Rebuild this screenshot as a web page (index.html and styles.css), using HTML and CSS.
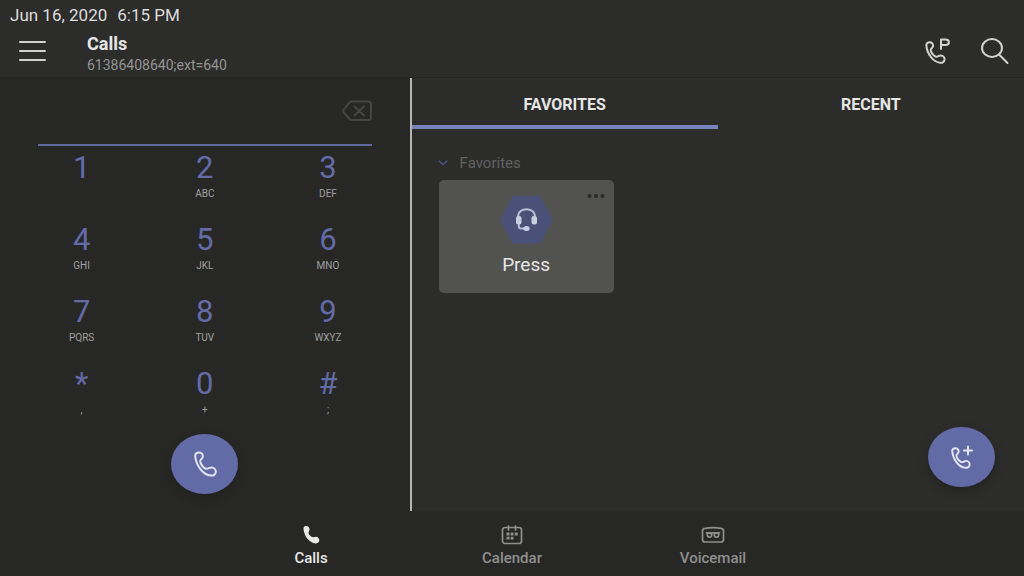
FILE: index.html
```
<!DOCTYPE html>
<html lang="en">
<head>
<meta charset="utf-8">
<title>Calls</title>
<meta name="viewport" content="width=device-width, initial-scale=1">
<link rel="stylesheet" href="styles.css">
</head>
<body>
<svg class="defs" aria-hidden="true">
  <symbol id="handset" viewBox="0 0 24 26">
    <path d="M2.2 5C2 2.8 4 1.4 6 1.4C8.4 1.4 10.2 3.4 9.800 5.800C9.500 7.600 7 8.400 7.200 10.400C7.600 13.400 10.400 17 13 17.800C15 18.300 16.400 16.300 18.600 16.400C21 16.600 23 18.600 22.800 21C22.600 23.500 20.400 24.800 18 24.600C9.600 24 2.800 13.600 2.200 5Z"/>
  </symbol>
</svg>
<header class="header">
  <div class="clock"><span>Jun 16, 2020</span><span>6:15 PM</span></div>
  <div class="bar">
    <button class="icon-btn" aria-label="Menu">
      <svg width="28" height="22" viewBox="0 0 28 22" stroke-width="2"><path d="M2 2H27M2 11H27M2 20H27"/></svg>
    </button>
    <div class="title">
      <h1>Calls</h1>
      <p>61386408640;ext=640</p>
    </div>
    <div class="actions">
      <button class="icon-btn" aria-label="Parked calls">
        <svg width="28" height="28" viewBox="0 0 28 28" stroke-width="2"><use href="#handset" x="0" y="4" width="22" height="23" stroke-width="2.300"/><path d="M17 12V2.500H21.500C26 2.500 26 8 21.500 8H17"/></svg>
      </button>
      <button class="icon-btn" aria-label="Search">
        <svg width="30" height="28" viewBox="0 0 30 28" stroke-width="2"><ellipse cx="12" cy="11" rx="10" ry="9"/><path d="M19 17.500L27.500 26"/></svg>
      </button>
    </div>
  </div>
</header>
<main class="main">
  <section class="dialer" aria-label="Dial pad">
    <div class="entry">
      <input type="tel" aria-label="Phone number">
      <button class="icon-btn erase" aria-label="Delete digit">
        <svg width="30" height="22" viewBox="0 0 30 22" stroke-width="2"><path d="M10 1.500H26Q29 1.500 29 4V17.500Q29 20 26 20H10Q8.500 20 7.500 19L1.800 12.500Q.500 11 1.800 9.500L7.500 2.500Q8.500 1.500 10 1.500ZM12.500 6.500L22 15.500M22 6.500L12.500 15.500"/></svg>
      </button>
    </div>
    <div class="keys">
      <button class="key"><b>1</b><small></small></button>
      <button class="key"><b>2</b><small>ABC</small></button>
      <button class="key"><b>3</b><small>DEF</small></button>
      <button class="key"><b>4</b><small>GHI</small></button>
      <button class="key"><b>5</b><small>JKL</small></button>
      <button class="key"><b>6</b><small>MNO</small></button>
      <button class="key"><b>7</b><small>PQRS</small></button>
      <button class="key"><b>8</b><small>TUV</small></button>
      <button class="key"><b>9</b><small>WXYZ</small></button>
      <button class="key"><b>*</b><small>,</small></button>
      <button class="key"><b>0</b><small>+</small></button>
      <button class="key"><b>#</b><small>;</small></button>
    </div>
    <button class="fab" aria-label="Call">
      <svg width="26" height="28" viewBox="0 0 26 28" stroke-width="2"><use href="#handset" x="1" y="1" width="24" height="26"/></svg>
    </button>
  </section>
  <section class="lists">
    <div class="tabs" role="tablist">
      <button class="tab active" role="tab" aria-selected="true">FAVORITES</button>
      <button class="tab" role="tab" aria-selected="false">RECENT</button>
    </div>
    <div class="group">
      <button class="group-head">
        <svg width="12" height="8" viewBox="0 0 12 8" stroke-width="1.500"><path d="M2 2L6 5.500L10 2"/></svg>
        Favorites
      </button>
      <article class="card">
        <button class="more" aria-label="More options">
          <svg width="18" height="6" viewBox="0 0 18 6"><circle cx="2.500" cy="3" r="2.100"/><circle cx="9" cy="3" r="2.100"/><circle cx="15.500" cy="3" r="2.100"/></svg>
        </button>
        <svg class="avatar" width="54" height="50" viewBox="0 0 54 50">
          <path class="hex" d="M15.500 1H39.500Q41 1 42 2.500L53 23.500Q53.800 25 53 26.500L42 47Q41 48.500 39.500 48.500H15.500Q14 48.500 13 47L2 26.500Q1 25 2 23.500L13 2.500Q14 1 15.500 1Z"/>
          <path class="wire" d="M19 23V22C19 11.500 36 11.500 36 22V23M19.800 27V31Q19.800 33.500 22 33.500H27"/>
          <rect x="17" y="21" width="5.500" height="8.500" rx="2.200"/><rect x="32.500" y="21" width="5.500" height="8.500" rx="2.200"/><ellipse cx="27.500" cy="33.500" rx="3.200" ry="2.500"/>
        </svg>
        <span>Press</span>
      </article>
    </div>
    <button class="fab new-call" aria-label="New call">
      <svg width="24" height="26" viewBox="0 0 24 26" stroke-width="2"><use href="#handset" x="0" y="3" width="21" height="22" stroke-width="2.300"/><path d="M14 6.500H22M18 2.500V10.500"/></svg>
    </button>
  </section>
</main>
<nav class="nav">
  <a class="current" href="#calls" aria-current="page">
    <svg width="22" height="20" viewBox="0 0 22 20"><path d="M3.500 4C3.300 2 4.500 1 6 1C8 1 9.300 2 9.500 4C9.700 6 8.300 6.800 8.500 8C9 10 11 11.800 13 12.200C14.500 12.300 15.500 11.500 17 12C18.500 12.600 19.500 14 19.300 15.500C19.200 17.300 17.500 18.500 15.500 18.400C9 17.800 4 10.800 3.500 4Z"/></svg>
    Calls
  </a>
  <a href="#calendar">
    <svg width="22" height="20" viewBox="0 0 22 20"><rect x="1.500" y="2.500" width="19" height="16" rx="2.500"/><path d="M7.500 1V5M14.500 1V5"/><path d="M5.500 7.500H8.500V10.500H5.500ZM9.700 7.500H12.500V10.500H9.700ZM13.800 7.500H16.800V10.500H13.800ZM5.500 11.700H8.500V14.500H5.500ZM9.700 11.700H12.500V14.500H9.700Z" fill="currentColor" stroke="none"/></svg>
    Calendar
  </a>
  <a href="#voicemail">
    <svg width="24" height="20" viewBox="0 0 24 20"><path d="M4 3.300Q12 2 20 3.300Q22.500 3.500 22.500 6V14.500Q22.500 17 20 17H4Q1.500 17 1.500 14.500V6Q1.500 3.500 4 3.300Z"/><circle cx="8.500" cy="10" r="2.200"/><circle cx="15.500" cy="10" r="2.200"/><path d="M5.500 7.800H18.500"/></svg>
    Voicemail
  </a>
</nav>
</body>
</html>
```
FILE: styles.css
```
* { box-sizing: border-box; }

body {
  margin: 0;
  min-height: 100vh;
  display: grid;
  grid-template-rows: auto 1fr auto;
  background: #272726;
  color: #e6e6e5;
  font-family: Roboto, "Liberation Sans", sans-serif;
}

button {
  border: 0;
  padding: 0;
  background: none;
  color: inherit;
  font: inherit;
}

svg {
  display: block;
  fill: none;
  stroke: currentColor;
  stroke-linecap: round;
  stroke-linejoin: round;
}

.defs { position: absolute; width: 0; height: 0; }

.header {
  padding: 5px 14px 0 10px;
  background: #2c2c2b;
}

.clock {
  display: flex;
  gap: 10px;
  font-size: 17px;
  line-height: 20px;
  color: #dcdcda;
}

.bar {
  display: flex;
  align-items: center;
  height: 52px;
  padding-left: 8px;
}

.icon-btn { color: #d2d2d0; }

.title { margin-left: 41px; padding-top: 5px; flex: 1; }

.title h1 {
  margin: 0;
  font-size: 18px;
  font-weight: 700;
  line-height: 22px;
}

.title p {
  margin: 0;
  font-size: 14px;
  line-height: 20px;
  color: #949492;
}

.actions { display: flex; gap: 28px; }

.main {
  display: grid;
  grid-template-columns: 2fr 3fr;
  border-top: 1px solid #242423;
}

.dialer {
  padding: 0 20px 16px;
  display: flex;
  flex-direction: column;
  align-items: center;
}

.entry {
  align-self: stretch;
  display: flex;
  align-items: center;
  height: 68px;
  margin: 0 18px 4px;
  border-bottom: 2px solid #5f66a0;
}

.entry input {
  flex: 1;
  min-width: 0;
  border: 0;
  background: none;
  color: inherit;
  font: inherit;
}

.erase { color: #454544; }

.keys {
  align-self: stretch;
  display: grid;
  grid-template-columns: repeat(3, 1fr);
  grid-auto-rows: 72px;
}

.key {
  display: flex;
  flex-direction: column;
  align-items: center;
  gap: 2px;
}

.key b {
  font-size: 31px;
  font-weight: 400;
  line-height: 36px;
  color: #626ba6;
}

.key small {
  font-size: 10px;
  line-height: 12px;
  color: #a0a09e;
}

.fab {
  display: grid;
  place-items: center;
  width: 67px;
  height: 60px;
  margin-top: -4px;
  border-radius: 50%;
  background: #626ba6;
  color: #e4e4f0;
  box-shadow: 0 4px 8px #1c1c1c99;
}

.lists {
  display: flex;
  flex-direction: column;
  border-left: 2px solid #b5b5b3;
  background: #2c2c2b;
}

.tabs {
  display: grid;
  grid-template-columns: 1fr 1fr;
}

.tab {
  height: 51px;
  padding-top: 6px;
  border-bottom: 4px solid transparent;
  font-size: 16px;
  font-weight: 700;
}

.tab.active { border-color: #7883bd; }

.group { flex: 1; padding: 24px 27px; }

.group-head {
  display: flex;
  align-items: center;
  gap: 11px;
  color: #626260;
  font-size: 15px;
  line-height: 20px;
}

.group-head svg { color: #4c5284; margin-left: -2px; }

.card {
  position: relative;
  display: flex;
  flex-direction: column;
  align-items: center;
  width: 175px;
  margin-top: 7px;
  padding: 15px 0 16px;
  border-radius: 5px;
  background: #525250;
  font-size: 19px;
  line-height: 24px;
}

.card > span { margin-top: 8px; }

.more { position: absolute; top: 13px; right: 9px; }

.more svg { fill: #2c2c2b; stroke: none; }

.avatar { fill: #c5cedd; stroke: none; }
.avatar .hex { fill: #4a5179; }
.avatar .wire { fill: none; stroke: #b4bed0; stroke-width: 2; }

.new-call { align-self: flex-end; margin: 0 29px 24px; }

.nav {
  display: grid;
  grid-template-columns: repeat(3, 201px);
  justify-content: center;
  padding: 14px 0 8px;
}

.nav a {
  display: flex;
  flex-direction: column;
  align-items: center;
  gap: 3px;
  color: #8f8f8d;
  font-size: 15px;
  font-weight: 500;
  line-height: 20px;
  text-decoration: none;
}

.nav svg { stroke-width: 1.700; }

.nav .current { color: #e8e8e7; }
.nav .current svg { fill: currentColor; stroke: none; }
```
